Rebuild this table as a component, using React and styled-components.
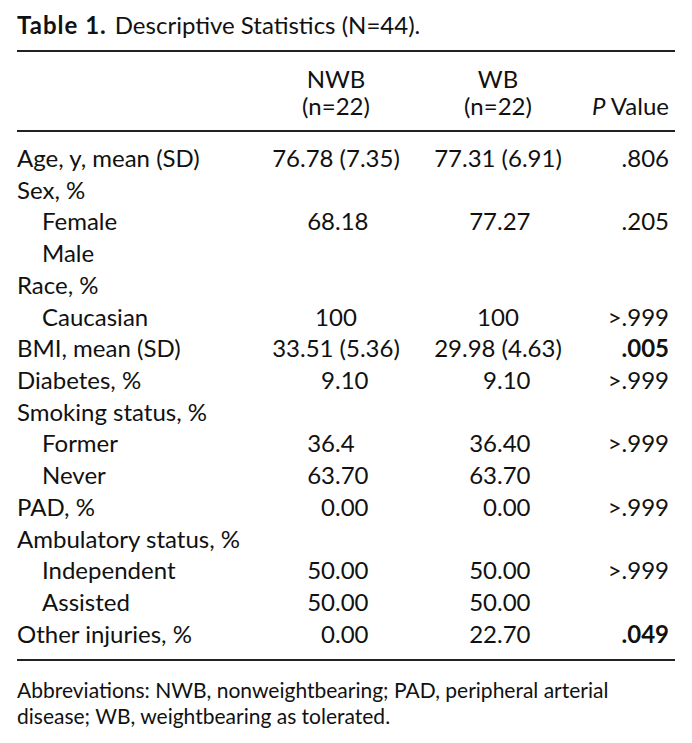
import React from "react";
import styled, { createGlobalStyle } from "styled-components";

const Global = createGlobalStyle`
  html, body { margin: 0; padding: 0; background: #fff; }
  body { font-family: Lato, "Open Sans", sans-serif; color: #111; }
`;

const Page = styled.div`
  width: 692px;
  height: 743px;
  box-sizing: border-box;
  padding: 10px 17px 0 17px;
  background: #fff;
`;

const Title = styled.div`
  font-size: 24px;
  line-height: 30px;
  height: 30px;
  margin-bottom: 10px;
  white-space: nowrap;
`;

const TitleLabel = styled.span`
  font-weight: 700;
  letter-spacing: 1px;
  margin-right: 8px;
`;

const Table = styled.div`
  width: 658px;
  border-top: 2px solid #222;
  border-bottom: 2px solid #222;
`;

const Head = styled.div`
  display: grid;
  grid-template-columns: 238px 162px 162px 1fr;
  padding: 13px 6px 11px 0;
  border-bottom: 2px solid #222;
  font-size: 24px;
  line-height: 27px;
`;

const HeadCell = styled.div`
  text-align: ${(p) => (p.$right ? "right" : "center")};
  align-self: end;
`;

const Body = styled.div`
  padding: 10px 6px 9px 0;
`;

const Row = styled.div`
  display: grid;
  grid-template-columns: 238px 162px 162px 1fr;
  font-size: 24px;
  height: 31.73px;
  line-height: 31.73px;
  align-items: center;
`;

const Label = styled.div`
  padding-left: ${(p) => (p.$indent ? "25px" : "0")};
  white-space: nowrap;
`;

const Cell = styled.div`
  text-align: center;
  white-space: nowrap;
`;

const Dec = styled.div`
  display: flex;
  white-space: nowrap;
`;

const IntPart = styled.span`
  width: 80px;
  text-align: right;
`;

const FracPart = styled.span`
  text-align: left;
`;

const PCell = styled.div`
  text-align: right;
  white-space: nowrap;
  font-weight: ${(p) => (p.$bold ? 700 : 400)};
`;

const Italic = styled.i`
  font-style: italic;
`;

const Footnote = styled.p`
  margin: 16px 0 0 0;
  width: 658px;
  font-size: 21px;
  line-height: 26px;
`;

const Num = ({ v }) => {
  const m = /^(\d+)(\.\d+)$/.exec(v || "");
  if (m) {
    return (
      <Dec>
        <IntPart>{m[1]}</IntPart>
        <FracPart>{m[2]}</FracPart>
      </Dec>
    );
  }
  return <Cell>{v}</Cell>;
};

const rows = [
  { label: "Age, y, mean (SD)", a: "76.78 (7.35)", b: "77.31 (6.91)", p: ".806" },
  { label: "Sex, %" },
  { label: "Female", indent: true, a: "68.18", b: "77.27", p: ".205" },
  { label: "Male", indent: true },
  { label: "Race, %" },
  { label: "Caucasian", indent: true, a: "100", b: "100", p: ">.999" },
  { label: "BMI, mean (SD)", a: "33.51 (5.36)", b: "29.98 (4.63)", p: ".005", bold: true },
  { label: "Diabetes, %", a: "9.10", b: "9.10", p: ">.999" },
  { label: "Smoking status, %" },
  { label: "Former", indent: true, a: "36.4", b: "36.40", p: ">.999" },
  { label: "Never", indent: true, a: "63.70", b: "63.70" },
  { label: "PAD, %", a: "0.00", b: "0.00", p: ">.999" },
  { label: "Ambulatory status, %" },
  { label: "Independent", indent: true, a: "50.00", b: "50.00", p: ">.999" },
  { label: "Assisted", indent: true, a: "50.00", b: "50.00" },
  { label: "Other injuries, %", a: "0.00", b: "22.70", p: ".049", bold: true },
];

export default function App() {
  return (
    <Page>
      <Global />
      <Title>
        <TitleLabel>Table 1.</TitleLabel>Descriptive Statistics (N=44).
      </Title>
      <Table>
        <Head>
          <HeadCell />
          <HeadCell>
            NWB
            <br />
            (n=22)
          </HeadCell>
          <HeadCell>
            WB
            <br />
            (n=22)
          </HeadCell>
          <HeadCell $right>
            <Italic>P</Italic> Value
          </HeadCell>
        </Head>
        <Body>
          {rows.map((r, i) => (
            <Row key={i}>
              <Label $indent={r.indent}>{r.label}</Label>
              <Num v={r.a} />
              <Num v={r.b} />
              <PCell $bold={r.bold}>{r.p}</PCell>
            </Row>
          ))}
        </Body>
      </Table>
      <Footnote>
        Abbreviations: NWB, nonweightbearing; PAD, peripheral arterial disease; WB,
        weightbearing as tolerated.
      </Footnote>
    </Page>
  );
}
